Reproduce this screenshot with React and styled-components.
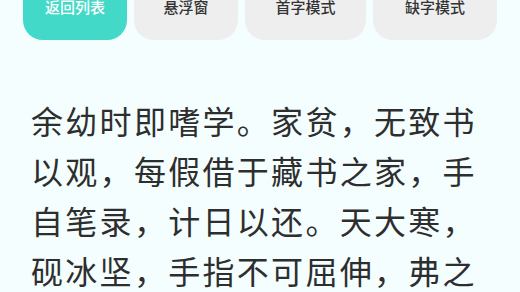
import React from "react"
import styled, { createGlobalStyle } from "styled-components"

const GlobalStyle = createGlobalStyle`
  html, body {
    margin: 0;
    padding: 0;
    background: #f4fefe;
    overflow: hidden;
  }
  body {
    font-family: "Noto Sans CJK SC", "Noto Sans", sans-serif;
  }
`

const Page = styled.div`
  width: 520px;
  height: 292px;
  overflow: hidden;
  background: #f4fefe;
`

const Toolbar = styled.div`
  display: flex;
  gap: 7px;
  padding-left: 23px;
  margin-top: -28px;
`

const ModeButton = styled.button`
  width: ${(p) => p.$w}px;
  height: 68px;
  border: none;
  border-radius: 20px;
  background: ${(p) => (p.$active ? "#43d9c8" : "#eeeeee")};
  color: ${(p) => (p.$active ? "#ffffff" : "#333333")};
  font-family: "Noto Sans CJK SC", sans-serif;
  font-size: 15px;
  font-weight: 500;
  display: flex;
  align-items: center;
  justify-content: center;
  padding: 0;
`

const Passage = styled.p`
  margin: 55px 0 0;
  padding-left: 31px;
  font-size: 32px;
  line-height: 50px;
  letter-spacing: 2.3px;
  color: #2e2e2e;
  width: 470px;
  white-space: nowrap;
`

const lines = [
  "余幼时即嗜学。家贫，无致书",
  "以观，每假借于藏书之家，手",
  "自笔录，计日以还。天大寒，",
  "砚冰坚，手指不可屈伸，弗之",
]

const buttons = [
  { label: "返回列表", w: 104, active: true },
  { label: "悬浮窗", w: 104 },
  { label: "首字模式", w: 121 },
  { label: "缺字模式", w: 124 },
]

export default function App() {
  return (
    <Page>
      <GlobalStyle />
      <Toolbar>
        {buttons.map((b) => (
          <ModeButton key={b.label} $w={b.w} $active={b.active}>
            {b.label}
          </ModeButton>
        ))}
      </Toolbar>
      <Passage>
        {lines.map((l, i) => (
          <React.Fragment key={i}>
            {l}
            <br />
          </React.Fragment>
        ))}
      </Passage>
    </Page>
  )
}
